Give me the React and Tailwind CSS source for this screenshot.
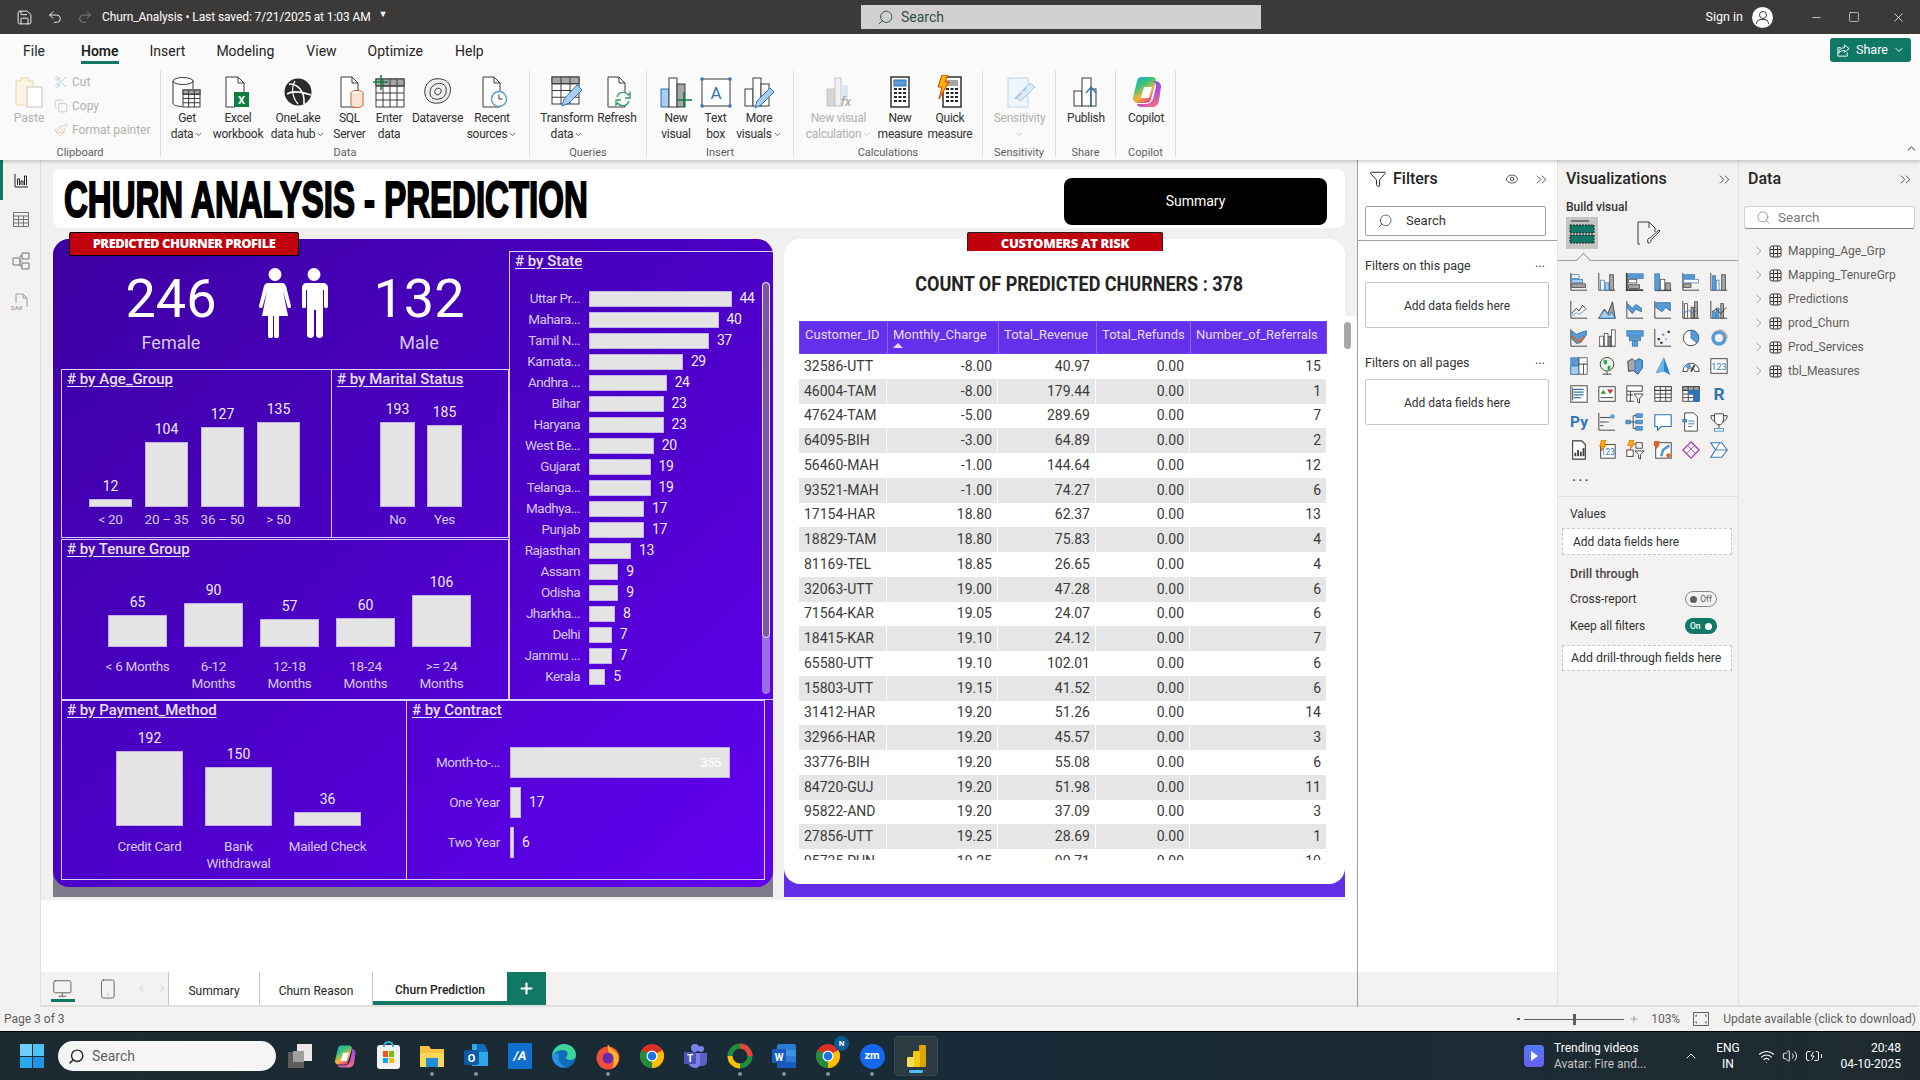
import {
  Save, Undo2, Redo2, Search, Minus, Square, X, ChevronDown, ChevronUp, ChevronRight, ChevronsRight,
  Filter, Eye, Scissors, Copy, Paintbrush, Plus, Monitor, Smartphone, ChevronLeft, Wifi, Volume2, BatteryCharging,
} from "lucide-react";

const D = "#3b3a39";
const BL = "#5b9bd5";
const LB = "#a9cdee";
const GY = "#a6a6a6";

const Ic = ({ children, s = 34, v = 34 }) => (
  <svg width={s} height={s} viewBox={`0 0 ${v} ${v}`} fill="none" stroke={D} strokeWidth="1">
    {children}
  </svg>
);

const Grid = ({ x, y, w, h, cols, rows, c = D, head = GY }) => (
  <g>
    <rect x={x} y={y} width={w} height={h} fill="#fff" stroke={c} />
    <rect x={x} y={y} width={w} height={h / (rows + 1)} fill={head} stroke={c} />
    {Array.from({ length: cols - 1 }, (_, i) => (
      <path key={i} d={`M${x + (w / cols) * (i + 1)} ${y}v${h}`} stroke={c} />
    ))}
    {Array.from({ length: rows }, (_, i) => (
      <path key={i} d={`M${x} ${y + (h / (rows + 1)) * (i + 1)}h${w}`} stroke={c} />
    ))}
  </g>
);

const Doc = ({ c = D }) => <path d="M8 2h11l6 6v24H8z M19 2v6h6" fill="#fff" stroke={c} />;

const GetData = () => (
  <Ic>
    <ellipse cx="13" cy="6" rx="10" ry="3.5" fill="#fff" />
    <path d="M3 6v22c0 2 4 3.5 9 3.5M23 6v8" />
    <Grid x={13} y={15} w={17} h={17} cols={3} rows={3} />
  </Ic>
);
const Excel = () => (
  <Ic>
    <path d="M5 2h12l6 6v9M17 2v6h6M5 2v30h9" fill="#fff" />
    <rect x="13" y="17" width="15" height="15" fill="#107c41" stroke="none" />
    <text x="20.5" y="29" fontSize="11" fontWeight="700" fill="#fff" stroke="none" textAnchor="middle">X</text>
  </Ic>
);
const OneLake = () => (
  <Ic>
    <circle cx="17" cy="17" r="13.5" fill="#2b2b2b" stroke="none" />
    <path d="M8 9c8 0 16 6 15 20M6 19c6-4 18-1 24 1" stroke="#fff" strokeWidth="1.6" />
    <path d="M14 6c-4 7-3 16 3 23" stroke="#fff" strokeWidth="1.2" />
  </Ic>
);
const Sql = () => (
  <Ic>
    <Doc />
    <ellipse cx="24" cy="18" rx="6" ry="2.5" fill="#fff" stroke="#c8642a" />
    <path d="M18 18v12c0 1.5 3 2.5 6 2.5s6-1 6-2.5V18" fill="#fbe4d5" stroke="#c8642a" />
  </Ic>
);
const Enter = () => (
  <Ic>
    <Grid x={4} y={4} w={28} h={28} cols={4} rows={3} />
    <path d="M9 0v15M1 7h15" stroke="#107c41" strokeWidth="1.6" />
  </Ic>
);
const Dataverse = () => (
  <Ic>
    <path d="M9 6c5-4 18-3 20 5 2 7-2 16-11 17-7 1-13-2-14-9-1-5 1-10 5-13z" fill="#eee" />
    <path d="M13 10c4-3 11-2 12 3 1 5-1 10-7 11-4 1-9-1-9-6 0-3 1-6 4-8z" />
    <path d="M15 14c3-2 6 0 5 3s-5 4-6 1c-.5-2 0-3 1-4z" />
  </Ic>
);
const Recent = () => (
  <Ic>
    <Doc />
    <circle cx="24" cy="24" r="7.5" fill="#fff" stroke={BL} strokeWidth="1.4" />
    <path d="M24 19.5V24h3.5" />
  </Ic>
);
const Transform = () => (
  <Ic>
    <Grid x={2} y={2} w={27} h={27} cols={3} rows={3} />
    <path d="M12 31l2-7 13-14 5 5-13 13z" fill={LB} stroke="#2e75b6" />
  </Ic>
);
const RefreshI = () => (
  <Ic>
    <Doc />
    <circle cx="23" cy="24" r="7" fill="#fff" stroke="none" />
    <path d="M17 22a6.5 6.5 0 0 1 11.5-2l1.5-2v5h-5M29 26a6.5 6.5 0 0 1-11.5 2L16 30v-5h5" stroke="#2f9e5f" strokeWidth="1.3" />
  </Ic>
);
const NewVisual = () => (
  <Ic>
    <rect x="2" y="14" width="8" height="18" fill={LB} stroke="#2e75b6" />
    <rect x="10" y="3" width="8" height="29" fill="#fff" />
    <rect x="18" y="9" width="8" height="23" fill={GY} stroke={D} />
    <path d="M25 17v15M18 25h15" stroke="#107c41" strokeWidth="1.6" />
  </Ic>
);
const TextBox = () => (
  <Ic>
    <rect x="3" y="4" width="28" height="27" stroke={D} fill="#fff" />
    {[[3, 4], [31, 4], [3, 31], [31, 31]].map(([x, y]) => (
      <rect key={x + "-" + y} x={x - 1.5} y={y - 1.5} width="3" height="3" fill="#2e75b6" stroke="none" />
    ))}
    <text x="17" y="24" fontSize="17" fill="#2e75b6" stroke="none" textAnchor="middle">A</text>
  </Ic>
);
const MoreVisuals = () => (
  <Ic>
    <rect x="3" y="14" width="8" height="17" fill="#fff" />
    <rect x="11" y="3" width="8" height="28" fill="#fff" />
    <rect x="19" y="9" width="8" height="22" fill="#fff" />
    <path d="M13 33l2-7 13-13 4 4-13 13z" fill={LB} stroke="#2e75b6" />
  </Ic>
);
const Calc = () => (
  <Ic>
    <rect x="8" y="2" width="18" height="30" fill="#fff" stroke="#252423" strokeWidth="1.4" />
    <rect x="11" y="5" width="12" height="6" fill={BL} stroke="#2e75b6" />
    {[14, 18, 22, 26].map((y) => (
      <path key={y} d={`M11 ${y}h3M15.5 ${y}h3M20 ${y}h3`} stroke="#252423" strokeWidth="2" />
    ))}
  </Ic>
);
const Quick = () => (
  <Ic>
    <rect x="10" y="2" width="18" height="30" fill="#fff" stroke="#252423" strokeWidth="1.4" />
    <rect x="13" y="5" width="12" height="6" fill={GY} stroke="none" />
    {[14, 18, 22, 26].map((y) => (
      <path key={y} d={`M13 ${y}h3M17.5 ${y}h3M22 ${y}h3`} stroke="#252423" strokeWidth="2" />
    ))}
    <path d="M9 0h6l-3 7h4L6 24l3-12H5z" fill="#f7b500" stroke="#d83b01" />
  </Ic>
);
const NewCalc = () => (
  <Ic>
    <rect x="5" y="14" width="8" height="17" fill="#d6d6d6" stroke="#c8c6c4" />
    <rect x="13" y="3" width="6" height="28" fill="#f1f1f1" stroke="#c8c6c4" />
    <rect x="19" y="10" width="7" height="16" fill="#dbe9f6" stroke="none" />
    <text x="24" y="31" fontSize="13" fontStyle="italic" fill="#a19f9d" stroke="none" textAnchor="middle">fx</text>
  </Ic>
);
const Sensitivity = () => (
  <Ic>
    <path d="M5 3h20v29H5z" fill="#eef5fb" stroke="#bcd6ec" />
    <path d="M13 22l14-14 5 4-14 14z" fill="#dbe9f6" stroke="#a9c8e4" />
    <path d="M12 24l6-6M20 16l3-3" stroke="#a9c8e4" strokeWidth="2" />
  </Ic>
);
const Publish = () => (
  <Ic>
    <rect x="5" y="16" width="8" height="15" fill="#fff" />
    <rect x="13" y="3" width="9" height="28" fill="#fff" />
    <rect x="22" y="14" width="5" height="17" fill="#fff" />
    <path d="M22 32V13m-5 5l5-6 5 6" stroke="#2e75b6" strokeWidth="1.3" />
  </Ic>
);
const CopilotIc = ({ s = 34, id = "cp" }) => (
  <svg width={s} height={s} viewBox="0 0 34 34">
    <defs>
      <linearGradient id={id} x1="0" y1="0" x2="0.6" y2="1">
        <stop offset="0" stopColor="#19a7e0" />
        <stop offset="0.4" stopColor="#36c47a" />
        <stop offset="0.7" stopColor="#f4b63a" />
        <stop offset="1" stopColor="#e2487f" />
      </linearGradient>
      <linearGradient id={id + "b"} x1="0" y1="0" x2="0.6" y2="1">
        <stop offset="0" stopColor="#2c6fe0" />
        <stop offset="0.6" stopColor="#b04ad8" />
        <stop offset="1" stopColor="#f06a8a" />
      </linearGradient>
    </defs>
    <path d="M12 2h11c3 0 4 2 4 4L22 24c-1 3-3 4-6 4H9c-3 0-5-2-5-5L8 6c1-3 2-4 4-4z" fill={`url(#${id})`} />
    <path d="M22 6h4c4 0 6 3 6 6l-2 14c-1 4-3 6-7 6H12c-2 0-4-1-4-3h8c4 0 7-2 8-5l3-12c.5-3-1-6-5-6z" fill={`url(#${id}b)`} />
    <path d="M15 12h8l-3 11h-8z" fill="#fff" />
  </svg>
);

const RibbonBtn = ({ w, icon, lines, dim, caret }) => (
  <div className={`flex flex-col items-center shrink-0 ${w}`}>
    <div className="h-[40px] pt-[5px] flex justify-center items-start">{icon}</div>
    <div className={`flex flex-col items-center whitespace-nowrap text-[12px] tracking-[-0.25px] leading-[16px] ${dim ? "text-[#b3b0ad]" : "text-[#323130]"}`}>
      {lines.map((l, i) => (
        <span key={i} className="flex items-center gap-[1px] h-[16px]">
          {l}
          {caret && i === lines.length - 1 && <ChevronDown size={9} strokeWidth={2} />}
        </span>
      ))}
    </div>
  </div>
);

const Group = ({ w, label, children }) => (
  <div className={`flex flex-col h-[87px] shrink-0 border-r border-[#e1dfdd] ${w}`}>
    <div className="flex h-[77px] shrink-0">{children}</div>
    <div className="text-center text-[11px] leading-[11px] text-[#605e5c] whitespace-nowrap">{label}</div>
  </div>
);

const TitleBar = () => (
  <div className="h-[34px] bg-[#3b3a39] flex items-center text-white shrink-0">
    <Save size={17} strokeWidth={1.3} className="ml-[16px]" />
    <Undo2 size={16} strokeWidth={1.3} className="ml-[14px]" />
    <Redo2 size={16} strokeWidth={1.3} className="ml-[14px] text-[#8a8886]" />
    <span className="ml-[9px] text-[12px] tracking-[-0.1px] whitespace-nowrap">Churn_Analysis  •  Last saved: 7/21/2025 at 1:03 AM</span>
    <span className="ml-[8px] mb-[4px] text-[9px]">▼</span>
    <div className="absolute left-[861px] top-[5px] w-[400px] h-[24px] bg-[#d2d0ce] flex items-center text-[#2f4f4a] text-[14px]">
      <Search size={17} strokeWidth={1.3} className="ml-[16px] -scale-x-100" />
      <span className="ml-[7px]">Search</span>
    </div>
    <div className="ml-auto flex items-center">
      <span className="text-[12.5px] mr-[9px]">Sign in</span>
      <div className="w-[21px] h-[21px] rounded-full bg-white flex flex-col items-center justify-center">
        <div className="w-[8px] h-[8px] rounded-full border border-[#3b3a39]" />
        <div className="w-[13px] h-[5px] rounded-t-full border border-[#3b3a39] border-b-0" />
      </div>
      <Minus size={13} strokeWidth={1.2} className="ml-[37px]" />
      <Square size={12} strokeWidth={1.2} className="ml-[25px]" />
      <X size={15} strokeWidth={1.2} className="ml-[31px] mr-[14px]" />
    </div>
  </div>
);

const Ribbon = () => (
  <div className="h-[126px] bg-[#fafafa] shrink-0 shadow-[0_2px_3px_rgba(0,0,0,0.18)] relative z-10">
    <div className="h-[36px] flex items-start text-[14px] text-[#252423]">
      <span className="ml-[23px] mt-[7px]">File</span>
      <span className="ml-[36px] h-[30px] pt-[7px] font-semibold text-[#201f1e] border-b-[3px] border-[#117865]">Home</span>
      <span className="ml-[31px] mt-[7px]">Insert</span>
      <span className="ml-[31px] mt-[7px]">Modeling</span>
      <span className="ml-[32px] mt-[7px]">View</span>
      <span className="ml-[31px] mt-[7px]">Optimize</span>
      <span className="ml-[32px] mt-[7px]">Help</span>
      <div className="ml-auto mr-[9px] mt-[4px] w-[81px] h-[24px] bg-[#117865] rounded-[3px] text-white text-[12.5px] flex items-center justify-center gap-[5px]">
        <svg width="15" height="15" viewBox="0 0 16 16" fill="none" stroke="#fff">
          <path d="M9 2l5 4-5 4V8C6 8 4 9 3 11c0-4 2-6 6-6zM12 10v4H2V5h3" />
        </svg>
        <span>Share</span>
        <ChevronDown size={12} />
      </div>
    </div>
    <div className="flex h-[87px] relative">
      <Group w="w-[161px]" label="Clipboard">
        <div className="w-[54px] flex flex-col items-center pl-[4px]">
          <div className="h-[40px] pt-[6px]">
            <svg width="30" height="32" viewBox="0 0 30 32" fill="none">
              <path d="M2 5h5V2h7v3h5v24H2z" fill="#fdf3e2" stroke="#e8d5b5" />
              <rect x="13" y="11" width="15" height="20" fill="#fff" stroke="#c8c6c4" />
            </svg>
          </div>
          <span className="text-[12px] leading-[16px] text-[#b3b0ad]">Paste</span>
        </div>
        <div className="flex flex-col text-[12px] text-[#b3b0ad] pt-[4px] gap-[8px]">
          <span className="flex items-center gap-[4px] h-[16px]"><Scissors size={14} strokeWidth={1} className="text-[#8fb3d9]" />Cut</span>
          <span className="flex items-center gap-[4px] h-[16px]"><Copy size={14} strokeWidth={1} />Copy</span>
          <span className="flex items-center gap-[4px] h-[16px]"><Paintbrush size={14} strokeWidth={1} className="text-[#d9a77f]" />Format painter</span>
        </div>
      </Group>
      <Group w="w-[369px]" label="Data">
        <RibbonBtn w="w-[52px]" icon={<GetData />} lines={["Get", "data"]} caret />
        <RibbonBtn w="w-[50px]" icon={<Excel />} lines={["Excel", "workbook"]} />
        <RibbonBtn w="w-[70px]" icon={<OneLake />} lines={["OneLake", "data hub"]} caret />
        <RibbonBtn w="w-[33px]" icon={<Sql />} lines={["SQL", "Server"]} />
        <RibbonBtn w="w-[46px]" icon={<Enter />} lines={["Enter", "data"]} />
        <RibbonBtn w="w-[51px]" icon={<Dataverse />} lines={["Dataverse"]} />
        <RibbonBtn w="w-[58px]" icon={<Recent />} lines={["Recent", "sources"]} caret />
      </Group>
      <Group w="w-[117px]" label="Queries">
        <RibbonBtn w="w-[74px]" icon={<Transform />} lines={["Transform", "data"]} caret />
        <RibbonBtn w="w-[26px]" icon={<RefreshI />} lines={["Refresh"]} />
      </Group>
      <Group w="w-[147px]" label="Insert">
        <RibbonBtn w="w-[58px]" icon={<NewVisual />} lines={["New", "visual"]} />
        <RibbonBtn w="w-[21px]" icon={<TextBox />} lines={["Text", "box"]} />
        <RibbonBtn w="w-[66px]" icon={<MoreVisuals />} lines={["More", "visuals"]} caret />
      </Group>
      <Group w="w-[189px]" label="Calculations">
        <RibbonBtn w="w-[89px]" dim icon={<NewCalc />} lines={["New visual", "calculation"]} caret />
        <RibbonBtn w="w-[34px]" icon={<Calc />} lines={["New", "measure"]} />
        <RibbonBtn w="w-[66px]" icon={<Quick />} lines={["Quick", "measure"]} />
      </Group>
      <Group w="w-[73px]" label="Sensitivity">
        <RibbonBtn w="w-[73px]" dim icon={<Sensitivity />} lines={["Sensitivity", ""]} caret />
      </Group>
      <Group w="w-[60px]" label="Share">
        <RibbonBtn w="w-[60px]" icon={<Publish />} lines={["Publish"]} />
      </Group>
      <Group w="w-[60px]" label="Copilot">
        <RibbonBtn w="w-[60px]" icon={<CopilotIc />} lines={["Copilot"]} />
      </Group>
      <ChevronUp size={13} strokeWidth={1.8} className="absolute right-[2px] bottom-[2px] text-[#252423]" />
    </div>
  </div>
);

const Rail = () => (
  <div className="w-[41px] shrink-0 bg-[#f3f2f1] border-r border-[#e1dfdd] flex flex-col relative">
    <div className="absolute left-0 top-0 w-[3px] h-[40px] bg-[#117865]" />
    <div className="pl-[14px] pt-[13px]">
      <svg width="15" height="15" viewBox="0 0 15 15" fill="none" stroke="#252423"><path d="M1 1v13h13M3.5 12V6h2v6M7 12V8h2v4M10.5 12V3h2v9" /></svg>
    </div>
    <div className="pl-[13px] pt-[24px]">
      <svg width="16" height="15" viewBox="0 0 16 15" fill="none" stroke="#737373"><path d="M.5.5h15v14H.5zM.5 4h15M.5 7.5h15M.5 11h15M5.5 4v10M10.5 4v10" /></svg>
    </div>
    <div className="pl-[12px] pt-[25px]">
      <svg width="18" height="18" viewBox="0 0 18 18" fill="none" stroke="#737373"><path d="M1 6h7v7H1zM10 1h7v6h-7zM10 11h7v6h-7zM8 9h2M8 5v-1h2M8 13v1h2" /></svg>
    </div>
    <div className="pl-[11px] pt-[23px]">
      <svg width="19" height="19" viewBox="0 0 19 19" fill="none" stroke="#a19f9d"><path d="M5 10V1h7l4 4v9M12 1v4h4" /><text x="0" y="17" fontSize="6" fill="#8a8886" stroke="none">DAX</text></svg>
    </div>
  </div>
);

const Title = ({ children }) => (
  <div className="h-[20px] pl-[5px] text-[15px] leading-[18px] font-medium underline underline-offset-2 text-[#e8e0ff] whitespace-nowrap">
    {children}
  </div>
);

const VBars = ({ items, w, gap, ml, h, mt }) => (
  <div>
    <div className={`flex items-end ${gap} ${ml} ${h}`}>
      {items.map((d) => (
        <div key={d.label} className={`flex flex-col items-center ${w}`}>
          <span className="text-[14px] leading-[16px] mb-[5px] text-[#f0eaff]">{d.value}</span>
          <div className="w-full bg-[#e4e4e4] border border-[#c4b2ea]" style={{ height: d.h }} />
        </div>
      ))}
    </div>
    <div className={`flex ${gap} ${ml} ${mt}`}>
      {items.map((d) => (
        <div key={d.label} className={`flex flex-col items-center text-[13.5px] leading-[17px] tracking-[-0.3px] text-[#d5c8f2] ${w}`}>
          {d.label.split("|").map((l) => (
            <span key={l} className="whitespace-nowrap">{l}</span>
          ))}
        </div>
      ))}
    </div>
  </div>
);

const ageData = [
  { label: "< 20", value: 12, h: 8 },
  { label: "20 – 35", value: 104, h: 65 },
  { label: "36 – 50", value: 127, h: 80 },
  { label: "> 50", value: 135, h: 85 },
];
const maritalData = [
  { label: "No", value: 193, h: 85 },
  { label: "Yes", value: 185, h: 82 },
];
const tenureData = [
  { label: "< 6 Months", value: 65, h: 32 },
  { label: "6-12|Months", value: 90, h: 44 },
  { label: "12-18|Months", value: 57, h: 28 },
  { label: "18-24|Months", value: 60, h: 29 },
  { label: ">= 24|Months", value: 106, h: 52 },
];
const payData = [
  { label: "Credit Card", value: 192, h: 75 },
  { label: "Bank|Withdrawal", value: 150, h: 59 },
  { label: "Mailed Check", value: 36, h: 14 },
];
const states = [
  ["Uttar Pr...", 44], ["Mahara...", 40], ["Tamil N...", 37], ["Karnata...", 29], ["Andhra ...", 24],
  ["Bihar", 23], ["Haryana", 23], ["West Be...", 20], ["Gujarat", 19], ["Telanga...", 19],
  ["Madhya...", 17], ["Punjab", 17], ["Rajasthan", 13], ["Assam", 9], ["Odisha", 9],
  ["Jharkha...", 8], ["Delhi", 7], ["Jammu ...", 7], ["Kerala", 5],
];
const contracts = [
  ["Month-to-...", 355, 220],
  ["One Year", 17, 11],
  ["Two Year", 6, 4],
];
const rows = [
  ["32586-UTT", "-8.00", "40.97", "0.00", 15],
  ["46004-TAM", "-8.00", "179.44", "0.00", 1],
  ["47624-TAM", "-5.00", "289.69", "0.00", 7],
  ["64095-BIH", "-3.00", "64.89", "0.00", 2],
  ["56460-MAH", "-1.00", "144.64", "0.00", 12],
  ["93521-MAH", "-1.00", "74.27", "0.00", 6],
  ["17154-HAR", "18.80", "62.37", "0.00", 13],
  ["18829-TAM", "18.80", "75.83", "0.00", 4],
  ["81169-TEL", "18.85", "26.65", "0.00", 4],
  ["32063-UTT", "19.00", "47.28", "0.00", 6],
  ["71564-KAR", "19.05", "24.07", "0.00", 6],
  ["18415-KAR", "19.10", "24.12", "0.00", 7],
  ["65580-UTT", "19.10", "102.01", "0.00", 6],
  ["15803-UTT", "19.15", "41.52", "0.00", 6],
  ["31412-HAR", "19.20", "51.26", "0.00", 14],
  ["32966-HAR", "19.20", "45.57", "0.00", 3],
  ["33776-BIH", "19.20", "55.08", "0.00", 6],
  ["84720-GUJ", "19.20", "51.98", "0.00", 11],
  ["95822-AND", "19.20", "37.09", "0.00", 3],
  ["27856-UTT", "19.25", "28.69", "0.00", 1],
  ["95735-PUN", "19.25", "90.71", "0.00", 10],
];

const People = () => (
  <svg width="71" height="70" viewBox="0 0 71 70" fill="#fff">
    <circle cx="16" cy="6.5" r="6.5" />
    <path d="M9 15h14c2 0 3 1 4 3l5 20c.5 2-3 3-3.5 1L24 23l5 25H20v20c0 3-5 3-5 0V48h-1v20c0 3-5 3-5 0V48H3l5-25-4.5 16c-.5 2-4 1-3.5-1l5-20c1-2 2-3 4-3z" />
    <circle cx="55" cy="6.5" r="6.5" />
    <path d="M45 15h20c3 0 5 2 5 5v18c0 3-4 3-4 0V22h-1v45c0 4-7 4-7 0V42h-2v25c0 4-7 4-7 0V22h-1v16c0 3-4 3-4 0V20c0-3 2-5 5-5z" transform="translate(-1 0)" />
  </svg>
);

const PurplePanel = () => (
  <div className="relative w-[720px] h-[658px] shrink-0 rounded-t-[16px] bg-[#7f7b8a]">
    <div className="h-[648px] rounded-[16px] bg-linear-to-br from-[#3d00a2] via-[#4c00c6] to-[#6200f2]">
      <div className="absolute left-[16px] -top-[7px] w-[230px] h-[24px] bg-[#c0000c] border border-black rounded-[2px] text-white text-[13px] font-extrabold tracking-[-0.5px] font-['Open_Sans',sans-serif] flex items-center justify-center">
        PREDICTED CHURNER PROFILE
      </div>
      <div className="flex h-[461px]">
        <div className="w-[456px] pl-[8px] shrink-0">
          <div className="h-[130px] flex text-white">
            <div className="ml-[25px] w-[170px] pt-[32px] flex flex-col items-center">
              <span className="text-[54px] leading-[56px]">246</span>
              <span className="mt-[4px] text-[18px] leading-[24px] text-[#d5c8f2]">Female</span>
            </div>
            <div className="ml-[3px] pt-[29px]"><People /></div>
            <div className="ml-[9px] w-[160px] pt-[32px] flex flex-col items-center">
              <span className="text-[54px] leading-[56px]">132</span>
              <span className="mt-[4px] text-[18px] leading-[24px] text-[#d5c8f2]">Male</span>
            </div>
          </div>
          <div className="flex h-[169px]">
            <div className="w-[271px] border border-[#d9cff2]">
              <Title># by Age_Group</Title>
              <VBars items={ageData} w="w-[43px]" gap="gap-[13px]" ml="ml-[27px]" h="h-[117px]" mt="mt-[4px]" />
            </div>
            <div className="w-[177px] border border-l-0 border-[#d9cff2]">
              <Title># by Marital Status</Title>
              <VBars items={maritalData} w="w-[35px]" gap="gap-[12px]" ml="ml-[48px]" h="h-[117px]" mt="mt-[4px]" />
            </div>
          </div>
          <div className="h-[161px] mt-[1px] border border-[#d9cff2]">
            <Title># by Tenure Group</Title>
            <VBars items={tenureData} w="w-[59px]" gap="gap-[17px]" ml="ml-[46px]" h="h-[87px]" mt="mt-[11px]" />
          </div>
        </div>
        <div className="relative flex-1 mt-[12px] h-[449px] border-l border-t border-b border-[#d9cff2]">
          <Title># by State</Title>
          <div className="mt-[16px] flex flex-col">
            {states.map(([n, v]) => (
              <div key={n} className="h-[21px] flex items-center text-[13.5px] tracking-[-0.5px] text-[#d5c8f2]">
                <span className="w-[70px] text-right whitespace-nowrap">{n}</span>
                <div className="ml-[9px] h-[16px] bg-[#e4e4e4] border border-[#c4b2ea]" style={{ width: v * 3.24 }} />
                <span className="ml-[8px] text-[14px] text-[#f0eaff]">{v}</span>
              </div>
            ))}
          </div>
          <div className="absolute right-[3px] top-[30px] w-[8px] h-[412px] rounded-full bg-[#9a6ce8]">
            <div className="h-[356px] rounded-full bg-[#7a58a8] border border-[#e8e0ff]" />
          </div>
        </div>
      </div>
      <div className="flex ml-[8px] h-[180px]">
        <div className="w-[346px] border border-[#d9cff2]">
          <Title># by Payment_Method</Title>
          <VBars items={payData} w="w-[67px]" gap="gap-[22px]" ml="ml-[54px]" h="h-[105px]" mt="mt-[12px]" />
        </div>
        <div className="w-[358px] border border-l-0 border-[#d9cff2]">
          <Title># by Contract</Title>
          <div className="mt-[26px] flex flex-col gap-[9px]">
            {contracts.map(([n, v, w]) => (
              <div key={n} className="h-[31px] flex items-center text-[13.5px] tracking-[-0.4px] text-[#d5c8f2]">
                <span className="w-[93px] text-right whitespace-nowrap">{n}</span>
                <div className="relative ml-[10px] h-[31px] bg-[#e4e4e4] border border-[#c4b2ea] flex items-center justify-end" style={{ width: w }}>
                  {v === 355 && <span className="pr-[8px] text-[13px] text-white">355</span>}
                </div>
                {v !== 355 && <span className="ml-[8px] text-[14px] text-[#f0eaff]">{v}</span>}
              </div>
            ))}
          </div>
        </div>
      </div>
    </div>
  </div>
);

const RiskPanel = () => (
  <div className="relative w-[561px] h-[658px] shrink-0 bg-[linear-gradient(to_bottom,transparent_600px,#612de8_600px)]">
    <div className="absolute left-[183px] -top-[7px] w-[196px] h-[19px] pt-[3px] bg-[#c0000c] border border-b-0 border-[#222] rounded-t-[2px] text-white text-[13px] font-extrabold tracking-[-0.3px] font-['Open_Sans',sans-serif] flex items-center justify-center">
      CUSTOMERS AT RISK
    </div>
    <div className="h-[645px] bg-white rounded-[16px] pl-[15px]">
      <div className="pt-[33px] h-[82px] pl-[14px] text-center text-[#252423] whitespace-nowrap">
        <span className="inline-block text-[20px] leading-[24px] font-bold scale-x-[0.9]">COUNT OF PREDICTED CHURNERS : 378</span>
      </div>
      <div className="w-[528px] h-[539px] overflow-hidden text-[14px]">
        <div className="grid grid-cols-[88px_111px_98px_94px_137px] h-[33px] bg-[#6430eb] text-[13px] text-[#e6deff] border border-[#7048ee]">
          {["Customer_ID", "Monthly_Charge", "Total_Revenue", "Total_Refunds", "Number_of_Referrals"].map((h, i) => (
            <div key={h} className={`relative pl-[5px] pt-[3px] leading-[20px] whitespace-nowrap overflow-hidden ${i < 4 ? "border-r border-[#8c66f0]" : ""}`}>
              {h}
              {i === 1 && <span className="absolute left-[5px] top-[21px] w-0 h-0 border-x-[5px] border-x-transparent border-b-[5px] border-b-[#e6deff]" />}
            </div>
          ))}
        </div>
        {rows.map((r, i) => (
          <div key={r[0]} className={`grid grid-cols-[88px_111px_98px_94px_137px] h-[24.75px] items-stretch text-[#3b3a39] ${i % 2 ? "bg-[#e6e6e6]" : "bg-white"}`}>
            {r.map((c, j) => (
              <div key={j} className={`flex items-center px-[5px] border-r border-white ${j === 0 ? "justify-start" : "justify-end"}`}>
                {c}
              </div>
            ))}
          </div>
        ))}
      </div>
    </div>
    <div className="absolute -right-[6px] top-[83px] w-[7px] h-[27px] rounded-full bg-[#a8a8a8]" />
  </div>
);

const Canvas = () => (
  <div className="flex h-[812px] bg-white">
    <div className="w-[1304px] h-[740px] bg-[#f0f0f0] pl-[12px] pt-[9px] shrink-0">
      <div className="h-[59px] w-[1292px] bg-white rounded-[8px] flex items-center">
        <span className="ml-[11px] mt-[2px] text-[50px] leading-[50px] font-bold text-black font-['Liberation_Sans',sans-serif] whitespace-nowrap origin-left scale-x-[0.66] [-webkit-text-stroke:2px_black]">
          CHURN ANALYSIS - PREDICTION
        </span>
        <div className="ml-auto mr-[18px] mt-[6px] w-[263px] h-[47px] rounded-[8px] bg-black text-white text-[14px] flex items-center justify-center">
          Summary
        </div>
      </div>
      <div className="flex gap-[11px] mt-[11px]">
        <PurplePanel />
        <RiskPanel />
      </div>
    </div>
    <div className="w-[13px] h-[156px] bg-[#f0f0f0]" />
  </div>
);

const PageTabs = () => (
  <div className="h-[35px] bg-[#f3f2f1] flex border-b-2 border-[#e1dfdd] text-[12px] text-[#252423]">
    <div className="w-[127px] flex items-center text-[#605e5c] relative">
      <div className="absolute left-[10px] bottom-[3px] w-[24px] h-[3px] bg-[#117865]" />
      <Monitor size={21} strokeWidth={1.1} className="ml-[11px]" />
      <Smartphone size={22} strokeWidth={1} className="ml-[24px]" />
      <ChevronLeft size={11} className="ml-[18px] text-[#c8c6c4]" />
      <ChevronRight size={11} className="ml-[10px] text-[#c8c6c4]" />
    </div>
    <div className="w-[92px] pt-[4px] bg-white border-x border-[#c8c6c4] flex items-center justify-center">Summary</div>
    <div className="w-[113px] pt-[4px] bg-white border-r border-[#c8c6c4] flex items-center justify-center">Churn Reason</div>
    <div className="w-[134px] pt-[6px] bg-white border-b-[4px] border-[#117865] font-medium flex items-center justify-center">Churn Prediction</div>
    <div className="w-[39px] bg-[#117865] text-white flex items-center justify-center"><Plus size={17} strokeWidth={3} /></div>
  </div>
);

const FiltersPane = () => (
  <div className="w-[200px] shrink-0 flex flex-col border-l border-[#a19f9d]">
    <div className="h-[812px] bg-white">
      <div className="h-[38px] flex items-center pl-[11px] text-[#252423]">
        <Filter size={18} strokeWidth={1.3} />
        <span className="ml-[6px] text-[16px] font-medium">Filters</span>
        <Eye size={14} strokeWidth={1.3} className="ml-auto" />
        <ChevronsRight size={17} strokeWidth={1.1} className="ml-[14px] mr-[7px]" />
      </div>
      <div className="mt-[8px] mx-[7px] w-[181px] h-[30px] border border-[#a19f9d] rounded-[2px] flex items-center text-[13px] text-[#323130]">
        <Search size={16} strokeWidth={1.1} className="ml-[11px] -scale-x-100" />
        <span className="ml-[13px]">Search</span>
      </div>
      <div className="mt-[4px] border-b border-[#a19f9d]" />
      <div className="mt-[16px] h-[18px] px-[7px] flex items-center justify-between text-[12.5px] text-[#323130]">
        <span>Filters on this page</span>
        <span className="mr-[5px] mb-[6px]">...</span>
      </div>
      <div className="mt-[7px] mx-[7px] w-[184px] h-[46px] pt-[1px] border border-[#c8c6c4] rounded-[2px] flex items-center justify-center text-[12px] text-[#323130]">Add data fields here</div>
      <div className="mt-[26px] h-[18px] px-[7px] flex items-center justify-between text-[12.5px] text-[#323130]">
        <span>Filters on all pages</span>
        <span className="mr-[5px] mb-[6px]">...</span>
      </div>
      <div className="mt-[7px] mx-[7px] w-[184px] h-[46px] pt-[1px] border border-[#c8c6c4] rounded-[2px] flex items-center justify-center text-[12px] text-[#323130]">Add data fields here</div>
    </div>
    <div className="flex-1 bg-[#f3f2f1] border-b-2 border-[#e1dfdd]" />
  </div>
);

const A = () => <path d="M2 1v19h18" stroke={D} />;
const R = ({ x, y, w, h, f = BL, s = "#2e75b6" }) => <rect x={x} y={y} width={w} height={h} fill={f} stroke={s} strokeWidth="0.8" />;
const vizIcons = [
  <><A /><R x={3} y={3} w={8} h={4} f="#fff" /><R x={3} y={8} w={12} h={4} f={LB} /><R x={3} y={13} w={15} h={4} f={GY} s={D} /></>,
  <><A /><R x={4} y={9} w={4} h={11} f="#fff" /><R x={9} y={12} w={4} h={8} f={LB} /><R x={14} y={3} w={4} h={17} f={GY} s={D} /></>,
  <><path d="M2 1v19h18" stroke={D} strokeWidth="2" /><R x={4} y={2} w={16} h={5} /><R x={4} y={8} w={9} h={4} f="#fff" s={D} /><R x={4} y={14} w={12} h={4} f={GY} s={D} /></>,
  <><path d="M2 20h18" stroke={D} strokeWidth="2" /><R x={2} y={2} w={5} h={18} /><R x={8} y={8} w={5} h={12} f="#fff" s={D} /><R x={14} y={12} w={5} h={8} f={GY} s={D} /></>,
  <><A /><R x={3} y={3} w={12} h={4} /><R x={3} y={8} w={16} h={4} f="#fff" /><R x={3} y={13} w={8} h={4} f={GY} s={D} /></>,
  <><A /><R x={4} y={4} w={3} h={16} /><R x={8} y={9} w={3} h={11} f="#fff" /><R x={14} y={3} w={4} h={17} f={GY} s={D} /></>,
  <><A /><path d="M3 15l5-6 3 3 4-6 4 4" stroke={D} fill="none" /><path d="M3 18l5-4 3 2 8-6" stroke={BL} fill="none" /></>,
  <><path d="M2 20h18" stroke={D} /><path d="M2 20l6-10 4 5 5-13 3 18z" fill={GY} /><path d="M2 20l6-9 5 6 3-4 4 7z" fill={LB} stroke="#2e75b6" /></>,
  <><A /><path d="M3 4l5 5 4-4 6 4v4l-6-3-4 5-5-6z" fill={BL} stroke="#2e75b6" /></>,
  <><A /><path d="M3 3h16v9l-5-4-4 5-7-5z" fill={BL} stroke="#2e75b6" /></>,
  <><A /><R x={4} y={4} w={3} h={16} f="#fff" s={D} /><R x={11} y={8} w={3} h={12} f={GY} s={D} /><R x={15} y={2} w={3} h={18} f={GY} s={D} /><path d="M3 15l5-4 5 4 6-5" stroke="#2e75b6" fill="none" /></>,
  <><A /><R x={4} y={13} w={3} h={7} /><R x={8} y={9} w={3} h={11} /><R x={13} y={4} w={3} h={16} f={GY} s={D} /><path d="M3 13l5-3 5 5 6-7" stroke={D} fill="none" /></>,
  <><A /><path d="M3 3l5 4 5-2 6-2v5l-6 8-5 1-5-5z" fill={BL} stroke="#2e75b6" /><path d="M4 9l4 5 4 1 5-6" stroke="#d9692b" strokeWidth="2" fill="none" /></>,
  <><path d="M2 20h18" stroke={D} /><R x={3} y={9} w={4} h={11} f="#fff" s={D} /><R x={8} y={6} w={4} h={14} f="#fff" s={D} /><R x={13} y={9} w={2} h={11} f={GY} s={D} /><R x={16} y={2} w={4} h={18} f="#fff" s={D} /></>,
  <><R x={2} y={3} w={18} h={6} /><R x={5} y={10} w={12} h={4} /><R x={8} y={15} w={6} h={5} /></>,
  <><A /><rect x="5" y="11" width="2.5" height="2.5" fill={D} stroke="none" /><rect x="10" y="6" width="2.5" height="2.5" fill={BL} stroke="none" /><rect x="13" y="11" width="2.5" height="2.5" fill={LB} stroke="none" /><rect x="8" y="15" width="2.5" height="2.5" fill={D} stroke="none" /><rect x="16" y="3" width="2.5" height="2.5" fill={D} stroke="none" /></>,
  <><circle cx="11" cy="11" r="8.5" fill="#fff" stroke={D} /><path d="M11 11V2.5A8.5 8.5 0 0 1 17.5 16.5z" fill={BL} stroke="#2e75b6" /></>,
  <><circle cx="11" cy="11" r="6.5" fill="none" stroke={BL} strokeWidth="4" /><path d="M11 2.5a8.5 8.5 0 0 1 8.5 8.5" stroke={GY} strokeWidth="2" fill="none" /></>,
  <><R x={2} y={2} w={9} h={18} /><R x={2} y={11} w={9} h={9} f={LB} /><R x={11} y={2} w={9} h={7} f="#fff" s={D} /><R x={11} y={9} w={5} h={11} f="#fff" s={D} /><R x={16} y={9} w={4} h={11} f="#fff" s={D} /></>,
  <><circle cx="11" cy="9" r="7.5" fill="#eaf5ea" stroke={D} /><path d="M7 5c3-2 5 0 4 3s-4 1-4-3zM12 11c3-1 4 1 2 4s-3-2-2-4z" fill="#3fa34d" stroke="none" /><path d="M6 20h10M11 17v3" stroke={D} /></>,
  <><path d="M3 6l5-3 3 3 4-3 4 2v8l-5 7-5-4-5 1z" fill={GY} stroke={D} /><path d="M11 6l4-3 4 2v8l-5 7-3-3z" fill={BL} stroke="#2e75b6" /></>,
  <><path d="M12 1l7 20-7-4-9 2z" fill="#2e85cf" stroke="none" /><path d="M12 1v16l-9 2z" fill="#6fb5e8" stroke="none" /></>,
  <><path d="M2 17a9 9 0 0 1 18 0h-5a4 4 0 0 0-8 0z" fill="#fff" stroke={D} /><path d="M5 12a7 7 0 0 1 5-4l1 4-3 3z" fill={BL} stroke="none" /><path d="M11 17l4-7" stroke={D} strokeWidth="2" /></>,
  <><rect x="2" y="3" width="18" height="16" fill="#fff" stroke={D} /><text x="11" y="15.5" fontSize="10" fill="#2e75b6" stroke="none" textAnchor="middle">123</text></>,
  <><rect x="2" y="2" width="18" height="18" fill="#fff" stroke={D} /><path d="M5 6h11M5 9h11M5 12h11M5 15h8" stroke="#2e75b6" strokeWidth="1.4" /><path d="M4 4v14" stroke={D} /></>,
  <><rect x="2" y="3" width="18" height="16" fill="#fff" stroke={D} /><path d="M4 11l3-5 3 5z" fill="#3fa34d" stroke="none" /><path d="M11 6h7l-3.5 5z" fill="#d13438" stroke="none" /><path d="M4 15h14" stroke={D} /></>,
  <><path d="M2 2h17v6H2zM2 8v11h8M2 12h7M6 8v11" stroke={D} fill="#fff" /><path d="M10 11h10l-4 5v5l-2-1v-4z" fill="#fff" stroke={D} /></>,
  <><Grid x={2} y={3} w={18} h={16} cols={3} rows={3} head="#fff" /></>,
  <><Grid x={2} y={3} w={18} h={16} cols={3} rows={3} head={GY} /><R x={8} y={7} w={12} h={4} f="#2e75b6" s="#2e75b6" /><R x={14} y={11} w={6} h={8} f="#2e75b6" s="#2e75b6" /></>,
  <text x="11" y="18" fontSize="19" fontWeight="700" fill="#2e75b6" stroke="none" textAnchor="middle">R</text>,
  <text x="11" y="16" fontSize="17" fontWeight="700" fill="#2e75b6" stroke="none" textAnchor="middle">Py</text>,
  <><A /><path d="M3 6h12M3 11h7M3 15h4" stroke={D} /><circle cx="17" cy="5" r="2.5" fill={BL} stroke="none" /><rect x="10" y="10" width="3" height="2" fill={GY} stroke="none" /></>,
  <><R x={1} y={9} w={5} h={4} /><R x={12} y={2} w={7} h={4} /><R x={12} y={9} w={7} h={4} /><R x={12} y={16} w={7} h={4} /><path d="M6 11h6M9 4v14h3M9 4h3" stroke={D} fill="none" /></>,
  <path d="M2 3h18v13H9l-4 4v-4H2z" fill="#fff" stroke="#2e75b6" strokeWidth="1.2" />,
  <><path d="M4 1h10l4 4v16H4z" fill="#fff" stroke={D} /><R x={2} y={8} w={4} h={3} /><path d="M8 10h7M8 13h7M8 16h4" stroke="#2e75b6" /></>,
  <><path d="M6 2h10v7a5 5 0 0 1-10 0z" fill="#fff" stroke={D} /><path d="M6 4H2c0 4 2 6 5 6M16 4h4c0 4-2 6-5 6M11 14v4" stroke={D} fill="none" /><R x={6} y={18} w={10} h={3} f="#fff" /></>,
  <><path d="M4 1h10l4 4v16H4z" fill="#fff" stroke={D} strokeWidth="1.2" /><path d="M7 18v-4M10 18v-7M13 18v-5M16 18V9" stroke={D} strokeWidth="2" /></>,
  <><rect x="4" y="5" width="16" height="15" fill="#fff" stroke={D} /><text x="12" y="17" fontSize="9" fill="#2e75b6" stroke="none" textAnchor="middle">123</text><path d="M5 0h5L8 5h3l-7 8 2-6H3z" fill="#f7b500" stroke="#d83b01" strokeWidth="0.6" /></>,
  <><rect x="2" y="11" width="7" height="7" fill="#fff" stroke={D} /><rect x="12" y="3" width="7" height="6" fill="#fff" stroke={D} /><path d="M11 12h10l-4 4v5l-2-1v-4z" fill="#fff" stroke={D} /><path d="M5 0h5L8 4h3l-6 7 2-5H3z" fill="#f7b500" stroke="#d83b01" strokeWidth="0.6" /></>,
  <><rect x="3" y="3" width="17" height="17" fill="#fff" stroke={D} /><path d="M9 18l2-7 7-5" stroke={BL} strokeWidth="3" fill="none" /><path d="M1 1h6v5l-3 4-3-4z" fill="#d9692b" stroke="none" /><circle cx="17" cy="17" r="2.5" fill="#d9692b" stroke="none" /></>,
  <><path d="M11 2l9 9-9 9-9-9z" fill="none" stroke="#a340b6" strokeWidth="1.4" /><path d="M7 6l9 9M15 6l-9 9" stroke="#a340b6" /></>,
  <><path d="M2 3h12l6 8-6 8H2l5-8z" fill="#fff" stroke="#2e75b6" strokeWidth="1.2" /><path d="M7 11h13M12 3l-5 8" stroke="#2e75b6" /></>,
];

const Toggle = ({ on }) => (
  on ? (
    <div className="ml-auto mr-[21px] w-[32px] h-[16px] rounded-full bg-[#117865] flex items-center justify-between px-[5px] text-[8.5px] text-white font-medium">
      <span>On</span><span className="w-[7px] h-[7px] rounded-full bg-white" />
    </div>
  ) : (
    <div className="ml-auto mr-[21px] w-[32px] h-[16px] rounded-full border border-[#8a8886] flex items-center justify-between px-[4px] text-[8.5px] text-[#605e5c]">
      <span className="w-[7px] h-[7px] rounded-full bg-[#605e5c]" /><span>Off</span>
    </div>
  )
);

const VizPane = () => (
  <div className="w-[181px] shrink-0 bg-[#f3f2f1] border-l border-[#e1dfdd] border-b-2 border-b-[#e1dfdd] text-[#323130]">
    <div className="h-[38px] flex items-center pl-[8px] text-[16px] text-[#252423] font-medium">
      Visualizations
      <ChevronsRight size={17} strokeWidth={1.1} className="ml-auto mr-[5px]" />
    </div>
    <div className="h-[18px] pl-[8px] text-[12px] leading-[18px] font-medium">Build visual</div>
    <div className="relative flex items-center mt-[1px] h-[44px] border-b border-[#a19f9d]">
      <div className="ml-[8px] mb-[12px] w-[32px] h-[32px] bg-[#c8c6c4] flex items-center justify-center">
        <svg width="26" height="26" viewBox="0 0 26 26"><path d="M2 1h18" stroke="#252423" /><rect x="1" y="5" width="24" height="8" fill="#117865" stroke="#222" strokeDasharray="2 1" /><rect x="1" y="15" width="24" height="8" fill="#117865" stroke="#222" strokeDasharray="2 1" /></svg>
      </div>
      <div className="ml-[38px] mb-[12px]">
        <svg width="26" height="26" viewBox="0 0 26 26" fill="none" stroke={D}><path d="M4 24H2V2h11l6 6v4M13 2v6" /><path d="M12 23c2 0 3-1 3-3l9-9-1-1-9 8c-2 0-3 2-2 5z" /></svg>
      </div>
      <div className="absolute left-[20px] -bottom-[6px] w-[11px] h-[11px] bg-[#f3f2f1] rotate-45 border-l border-t border-[#a19f9d]" />
    </div>
    <div className="mt-[7px] ml-[7px] grid grid-cols-[repeat(6,28px)] auto-rows-[28px] relative">
      {vizIcons.map((ic, i) => (
        <div key={i} className="flex items-center justify-center">
          <Ic s={20} v={22}>{ic}</Ic>
        </div>
      ))}
    </div>
    <div className="h-[28px] pl-[14px] text-[#323130] tracking-[2px] leading-[24px]">...</div>
    <div className="mt-[4px] border-b border-[#e1dfdd]" />
    <div className="mt-[9px] h-[16px] pl-[12px] text-[12px] leading-[16px]">Values</div>
    <div className="mt-[6px] ml-[4px] w-[170px] h-[27px] bg-white border border-dashed border-[#c8c6c4] flex items-center pl-[10px] text-[12px]">Add data fields here</div>
    <div className="mt-[11px] h-[16px] pl-[12px] text-[12.5px] leading-[16px] font-medium text-[#484644]">Drill through</div>
    <div className="mt-[9px] h-[16px] pl-[12px] flex items-center text-[12px]">Cross-report<Toggle /></div>
    <div className="mt-[11px] h-[16px] pl-[12px] flex items-center text-[12px]">Keep all filters<Toggle on /></div>
    <div className="mt-[11px] ml-[4px] w-[170px] h-[26px] bg-white border border-dashed border-[#c8c6c4] flex items-center pl-[8px] text-[12.3px] whitespace-nowrap">Add drill-through fields here</div>
  </div>
);

const dataTables = ["Mapping_Age_Grp", "Mapping_TenureGrp", "Predictions", "prod_Churn", "Prod_Services", "tbl_Measures"];
const DataPane = () => (
  <div className="w-[181px] shrink-0 bg-[#f3f2f1] border-l border-[#e1dfdd] border-b-2 border-b-[#e1dfdd]">
    <div className="h-[38px] flex items-center pl-[9px] text-[16px] text-[#252423] font-medium">
      Data
      <ChevronsRight size={17} strokeWidth={1.1} className="ml-auto mr-[5px]" />
    </div>
    <div className="mt-[8px] ml-[5px] w-[171px] h-[23px] bg-white rounded-[3px] border border-[#d2d0ce] border-b-[#8a8886] flex items-center text-[13.5px] text-[#7a7876]">
      <Search size={15} strokeWidth={1.1} className="ml-[11px]" />
      <span className="ml-[7px]">Search</span>
    </div>
    <div className="mt-[10px] flex flex-col">
      {dataTables.map((t) => (
        <div key={t} className="h-[24px] flex items-center pl-[13px] text-[12px] text-[#605e5c]">
          <ChevronRight size={14} strokeWidth={1} />
          <svg width="13" height="13" viewBox="0 0 13 13" fill="none" stroke="#3b3a39" className="ml-[3px]">
            <rect x="1" y="1" width="11" height="11" rx="2" />
            <path d="M4.5 1v11M8.5 1v11M1 4.5h11M1 8.5h11" />
          </svg>
          <span className="ml-[6px]">{t}</span>
        </div>
      ))}
    </div>
  </div>
);

const StatusBar = () => (
  <div className="h-[24px] bg-[#f3f2f1] shrink-0 flex items-center text-[12px] text-[#605e5c]">
    <span className="ml-[4px]">Page 3 of 3</span>
    <div className="ml-auto flex items-center">
      <span className="w-[3px] h-[2px] bg-[#605e5c]" />
      <div className="relative ml-[4px] w-[100px] h-[1px] bg-[#605e5c]">
        <div className="absolute left-[49px] -top-[5px] w-[3px] h-[11px] bg-[#605e5c]" />
      </div>
      <Plus size={10} strokeWidth={1.3} className="ml-[5px]" />
      <span className="ml-[12px] text-[12px]">103%</span>
      <svg width="16" height="14" viewBox="0 0 16 14" fill="none" stroke="#605e5c" className="ml-[13px]"><path d="M.5.5h15v13H.5z" /><path d="M4 3H3v2M12 3h1v2M4 11H3V9M12 11h1V9" /></svg>
      <span className="ml-[14px] mr-[4px]">Update available (click to download)</span>
    </div>
  </div>
);

const TB = ({ children, dot, active }) => (
  <div className={`relative w-[44px] h-[40px] flex items-center justify-center ${active ? "bg-[#2c3a42] rounded-[4px] border border-[#3a4850]" : ""}`}>
    {children}
    {dot && <span className="absolute bottom-[0px] left-[20px] w-[4px] h-[4px] rounded-full bg-[#8a9298]" />}
    {active && <span className="absolute bottom-[2px] left-[14px] w-[14px] h-[3px] rounded-full bg-[#4cc2ff]" />}
  </div>
);

const Chrome = () => (
  <svg width="26" height="26" viewBox="0 0 26 26">
    <circle cx="13" cy="13" r="12" fill="#d93025" />
    <path d="M13 13L2.6 7A12 12 0 0 0 13 25z" fill="#1e8e3e" />
    <path d="M13 13l10.4-6A12 12 0 0 1 13 25z" fill="#fbbc04" />
    <circle cx="13" cy="13" r="5.5" fill="#fff" />
    <circle cx="13" cy="13" r="4.3" fill="#1a73e8" />
  </svg>
);

const Taskbar = () => (
  <div className="h-[49px] shrink-0 border-t border-black bg-linear-to-r from-[#1d2a30] via-[#172b38] to-[#1f2a30] flex items-center text-white relative">
    <div className="ml-[20px] w-[24px] h-[24px] grid grid-cols-2 gap-[1px]">
      <span className="bg-[#6fd0fb]" /><span className="bg-[#4cc2f5]" /><span className="bg-[#2aa8ee]" /><span className="bg-[#1f95e6]" />
    </div>
    <div className="ml-[14px] w-[218px] h-[30px] rounded-full bg-[#f5f5f5] flex items-center text-[#605e5c] text-[14px]">
      <Search size={17} strokeWidth={2} className="ml-[10px] text-[#252423] -scale-x-100" />
      <span className="ml-[7px]">Search</span>
    </div>
    <div className="ml-[2px] flex">
      <TB><div className="relative w-[24px] h-[24px]"><span className="absolute left-0 bottom-0 w-[16px] h-[16px] bg-[#5d5d5d]" /><span className="absolute right-0 top-0 w-[15px] h-[17px] bg-[#eaeaea]" /><span className="absolute left-[5px] top-[7px] w-[11px] h-[11px] bg-[#a0a0a0]" /></div></TB>
      <TB><CopilotIc s={25} id="cp2" /></TB>
      <TB>
        <div className="w-[23px] h-[24px] mt-[2px] bg-[#f2f2f2] rounded-[3px] grid grid-cols-2 gap-[1px] p-[6px] relative">
          <span className="absolute left-[6px] -top-[4px] w-[11px] h-[6px] border-2 border-b-0 border-[#29b6d8] rounded-t-full" />
          <span className="bg-[#f25022]" /><span className="bg-[#7fba00]" /><span className="bg-[#00a4ef]" /><span className="bg-[#ffb900]" />
        </div>
      </TB>
      <TB dot><svg width="26" height="24" viewBox="0 0 26 24"><path d="M1 2h9l2 3h13v18H1z" fill="#f6c443" /><rect x="1" y="9" width="24" height="14" fill="#fbd75b" /><rect x="7" y="14" width="12" height="9" fill="#1e90d8" /></svg></TB>
      <TB dot><svg width="26" height="26" viewBox="0 0 26 26"><path d="M9 1h12l4 8v14H9z" fill="#2ea8e6" /><path d="M14 1h7l4 8H14z" fill="#0f6cbd" /><rect x="1" y="7" width="15" height="15" rx="2" fill="#0c5aa6" /><text x="8.5" y="19" fontSize="11" fontWeight="700" fill="#fff" textAnchor="middle">O</text></svg></TB>
      <TB><div className="w-[24px] h-[26px] bg-[#1170cf] flex items-center justify-center italic font-bold text-[13px] text-white">/A</div></TB>
      <TB>
        <svg width="26" height="26" viewBox="0 0 26 26"><circle cx="13" cy="13" r="12" fill="#0f6cbd" /><path d="M1 13C2 5 8 1 13 1c7 0 12 5 12 11 0 3-3 5-6 5-2 0-4-1-4-3 3-2 2-7-3-7C7 7 4 9 1 13z" fill="#3dd598" /><path d="M8 12c-2 5 1 11 8 12-7 2-14-3-15-11 1-2 5-4 7-1z" fill="#2f8fe0" /></svg>
      </TB>
      <TB dot><svg width="26" height="28" viewBox="0 0 26 28"><circle cx="13" cy="16" r="11.5" fill="#f0503c" /><path d="M13 2c1 4 8 6 10 11 2 6-2 12-6 13 3-4 2-8 0-10-1 3-3 4-5 3-2 0-3-2-3-4l5-2c0-3-2-7-1-11z" fill="#ffb12a" /><circle cx="13" cy="16" r="5.5" fill="#6a2ba8" /></svg></TB>
      <TB><Chrome /></TB>
      <TB><svg width="26" height="26" viewBox="0 0 26 26"><circle cx="18" cy="6" r="3" fill="#7b83eb" /><circle cx="12" cy="5" r="4" fill="#7b83eb" /><path d="M15 10h9v8c0 3-2 5-5 5h-4z" fill="#5b5fc7" /><path d="M5 10h12v10c0 3-2 5-5 5s-7-3-7-6z" fill="#7b83eb" /><rect x="1" y="9" width="12" height="12" rx="1" fill="#4b53bc" /><text x="7" y="19" fontSize="10" fontWeight="700" fill="#fff" textAnchor="middle">T</text></svg></TB>
      <TB dot><svg width="26" height="26" viewBox="0 0 26 26"><circle cx="13" cy="13" r="10" fill="none" stroke="#1e8e3e" strokeWidth="5" /><path d="M13 3a10 10 0 0 1 10 10" fill="none" stroke="#e8453c" strokeWidth="5" /><path d="M3 13a10 10 0 0 0 10 10" fill="none" stroke="#fbbc04" strokeWidth="5" /></svg></TB>
      <TB dot><svg width="26" height="26" viewBox="0 0 26 26"><rect x="6" y="1" width="19" height="24" rx="2" fill="#2b7cd3" /><rect x="6" y="7" width="19" height="6" fill="#41a5ee" opacity="0.6" /><rect x="6" y="19" width="19" height="6" fill="#185abd" /><rect x="1" y="6" width="14" height="14" rx="1" fill="#185abd" /><text x="8" y="17.5" fontSize="10" fontWeight="700" fill="#fff" textAnchor="middle">W</text></svg></TB>
      <TB dot>
        <Chrome />
        <span className="absolute right-[1px] top-[0px] w-[15px] h-[15px] rounded-full bg-[#0b5a94] text-[8px] font-bold text-white flex items-center justify-center">N</span>
      </TB>
      <TB dot><div className="w-[25px] h-[25px] rounded-full bg-[#1467f0] flex items-center justify-center text-[11px] font-bold text-white">zm</div></TB>
      <TB active><svg width="26" height="26" viewBox="0 0 26 26"><rect x="16" y="2" width="7" height="22" rx="1" fill="#d9a400" /><rect x="10" y="8" width="7" height="16" rx="1" fill="#f2c811" /><rect x="4" y="14" width="7" height="10" rx="1" fill="#fadb5e" /></svg></TB>
    </div>
    <div className="ml-auto flex items-center">
      <div className="w-[20px] h-[22px] rounded-[4px] bg-linear-to-b from-[#4f7bf7] to-[#6a5cf0] flex items-center justify-center">
        <span className="w-0 h-0 border-y-[5px] border-y-transparent border-l-[7px] border-l-white" />
      </div>
      <div className="ml-[10px] w-[120px] flex flex-col text-[12px] leading-[16px]">
        <span>Trending videos</span>
        <span className="text-[#c8c6c4]">Avatar: Fire and...</span>
      </div>
      <ChevronUp size={16} strokeWidth={1.5} className="ml-[9px]" />
      <div className="ml-[12px] w-[34px] flex flex-col items-center text-[12px] leading-[16px]">
        <span>ENG</span><span>IN</span>
      </div>
      <Wifi size={17} strokeWidth={1.5} className="ml-[13px]" />
      <Volume2 size={16} strokeWidth={1.3} className="ml-[7px]" />
      <BatteryCharging size={18} strokeWidth={1.3} className="ml-[7px]" />
      <div className="ml-[10px] w-[68px] mr-[19px] flex flex-col items-end text-[12px] leading-[16px]">
        <span>20:48</span><span>04-10-2025</span>
      </div>
    </div>
  </div>
);

export default function App() {
  return (
    <div className="w-[1920px] h-[1080px] flex flex-col overflow-hidden bg-[#f3f2f1] font-['Roboto',sans-serif] relative">
      <TitleBar />
      <Ribbon />
      <div className="flex h-[847px] shrink-0">
        <Rail />
        <div className="w-[1316px] shrink-0 flex flex-col">
          <Canvas />
          <PageTabs />
        </div>
        <FiltersPane />
        <VizPane />
        <DataPane />
      </div>
      <StatusBar />
      <Taskbar />
    </div>
  );
}
